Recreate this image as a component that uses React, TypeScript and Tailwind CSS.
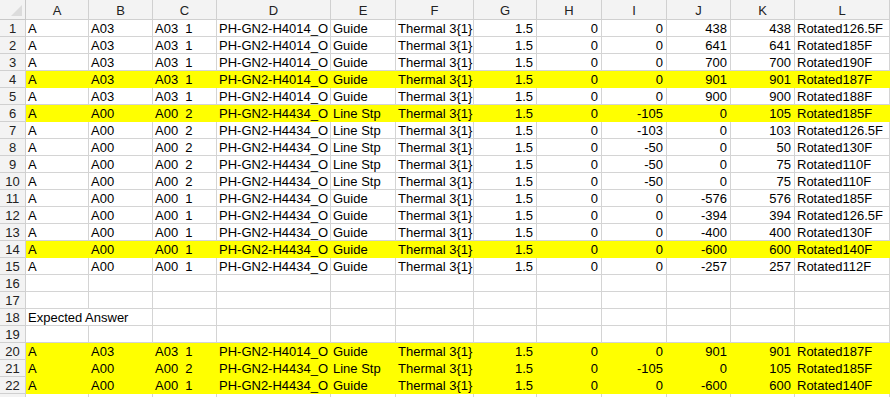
type Row = (string | number)[] | null;

const cols = ['A', 'B', 'C', 'D', 'E', 'F', 'G', 'H', 'I', 'J', 'K', 'L'];

const g4014 = ['A', 'A03', 'A03  1', 'PH-GN2-H4014_O', 'Guide', 'Thermal 3{1}', 1.5, 0];
const stp = ['A', 'A00', 'A00  2', 'PH-GN2-H4434_O', 'Line Stp', 'Thermal 3{1}', 1.5, 0];
const g4434 = ['A', 'A00', 'A00  1', 'PH-GN2-H4434_O', 'Guide', 'Thermal 3{1}', 1.5, 0];

const rows: { cells: Row; hl?: boolean; note?: string }[] = [
  { cells: [...g4014, 0, 438, 438, 'Rotated126.5F'] },
  { cells: [...g4014, 0, 641, 641, 'Rotated185F'] },
  { cells: [...g4014, 0, 700, 700, 'Rotated190F'] },
  { cells: [...g4014, 0, 901, 901, 'Rotated187F'], hl: true },
  { cells: [...g4014, 0, 900, 900, 'Rotated188F'] },
  { cells: [...stp, -105, 0, 105, 'Rotated185F'], hl: true },
  { cells: [...stp, -103, 0, 103, 'Rotated126.5F'] },
  { cells: [...stp, -50, 0, 50, 'Rotated130F'] },
  { cells: [...stp, -50, 0, 75, 'Rotated110F'] },
  { cells: [...stp, -50, 0, 75, 'Rotated110F'] },
  { cells: [...g4434, 0, -576, 576, 'Rotated185F'] },
  { cells: [...g4434, 0, -394, 394, 'Rotated126.5F'] },
  { cells: [...g4434, 0, -400, 400, 'Rotated130F'] },
  { cells: [...g4434, 0, -600, 600, 'Rotated140F'], hl: true },
  { cells: [...g4434, 0, -257, 257, 'Rotated112F'] },
  { cells: null },
  { cells: null },
  { cells: null, note: 'Expected Answer' },
  { cells: null },
  { cells: [...g4014, 0, 901, 901, 'Rotated187F'], hl: true },
  { cells: [...stp, -105, 0, 105, 'Rotated185F'], hl: true },
  { cells: [...g4434, 0, -600, 600, 'Rotated140F'], hl: true },
];

const headCell = 'h-[20px] bg-[#f3f3f3] border-r border-b border-[#d0d0d0] text-center leading-[21px] text-[#222]';
const rowHead = 'h-[17px] bg-[#f3f3f3] border-r border-b border-[#d0d0d0] text-center leading-[17px] text-[#222]';

export default function App() {
  return (
    <div
      className="w-[891px] h-[397px] overflow-hidden bg-white text-[13px] text-black"
      style={{ fontFamily: '"Liberation Sans", Arial, sans-serif' }}
    >
      <div className="grid grid-cols-[26px_63px_64px_64px_114px_65px_78px_63px_65px_65px_64px_64px_95px]">
        {/* corner */}
        <div className="h-[20px] bg-[#f3f3f3] border-r border-b border-[#c8c8c8] relative">
          <svg className="absolute right-[3px] bottom-[3px]" width="11" height="11" viewBox="0 0 11 11">
            <polygon points="11,0 11,11 0,11" fill="#dcdcdc" />
          </svg>
        </div>
        {cols.map((c) => (
          <div key={c} className={headCell}>
            {c}
          </div>
        ))}

        {rows.map((r, i) => (
          <Line key={i} n={i + 1} cells={r.cells} hl={r.hl} note={r.note} />
        ))}

        {/* partly visible row 23 */}
        <div className="h-[17px] bg-[#f3f3f3] border-r border-[#d0d0d0]" />
        {cols.map((c) => (
          <div key={c} className="h-[17px] border-r border-[#d4d4d4]" />
        ))}
      </div>
    </div>
  );
}

function Line({ n, cells, hl, note }: { n: number; cells: Row; hl?: boolean; note?: string }) {
  const base = hl
    ? 'h-[17px] bg-[#ffff00] border-r border-b border-[#ffff00] leading-[17px] overflow-hidden whitespace-pre'
    : 'h-[17px] border-r border-b border-[#d4d4d4] leading-[17px] overflow-hidden whitespace-pre';

  return (
    <>
      <div className={rowHead}>{n}</div>
      {note ? (
        <>
          <div className={`${base} col-span-2 pl-[2px]`}>{note}</div>
          {cols.slice(2).map((c) => (
            <div key={c} className={base} />
          ))}
        </>
      ) : (
        cols.map((c, j) => {
          const v = cells ? cells[j] : '';
          const num = typeof v === 'number';
          return (
            <div key={c} className={`${base} ${num ? 'text-right pr-[3px]' : 'pl-[2px]'}`}>
              {String(v)}
            </div>
          );
        })
      )}
    </>
  );
}
